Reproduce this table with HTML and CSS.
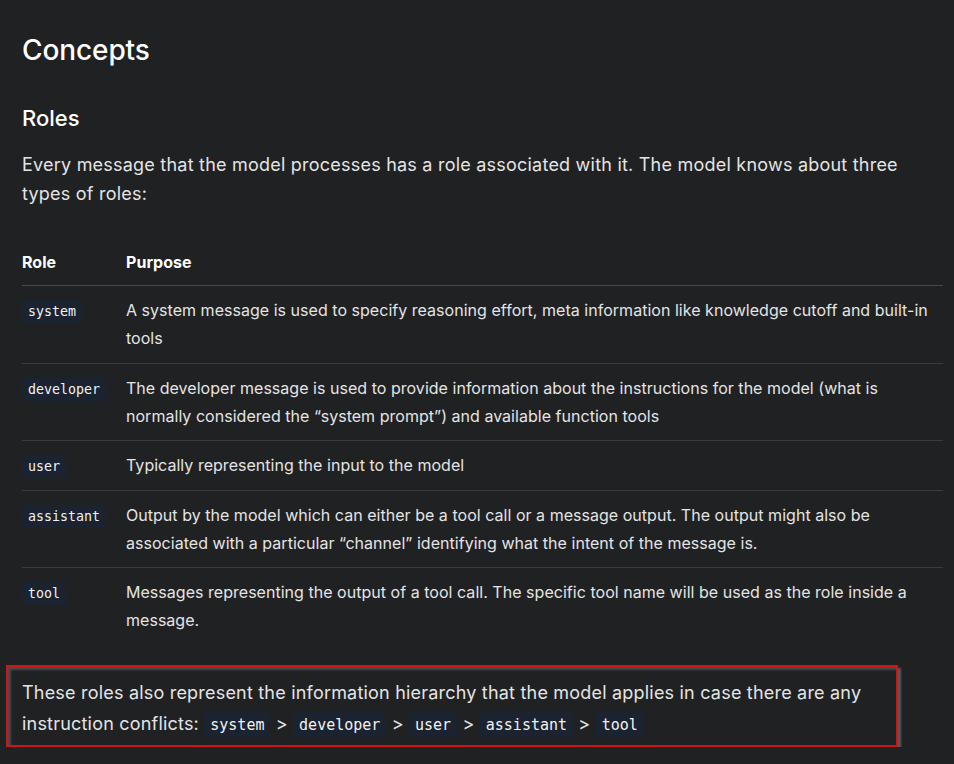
FILE: index.html
```html
<!DOCTYPE html>
<html lang="en">
<head>
<meta charset="utf-8">
<title>Concepts</title>
<link rel="stylesheet" href="styles.css">
</head>
<body>
<main class="doc">
  <h2 class="title">Concepts</h2>
  <h3 class="subtitle">Roles</h3>
  <p class="lead">Every message that the model processes has a role associated with it. The model knows about three types of roles:</p>
  <table class="roles">
    <thead>
      <tr><th class="col-role">Role</th><th>Purpose</th></tr>
    </thead>
    <tbody>
      <tr><td><code>system</code></td><td>A system message is used to specify reasoning effort, meta information like knowledge cutoff and built-in tools</td></tr>
      <tr><td><code>developer</code></td><td>The developer message is used to provide information about the instructions for the model (what is normally considered the “system prompt”) and available function tools</td></tr>
      <tr><td><code>user</code></td><td>Typically representing the input to the model</td></tr>
      <tr><td><code>assistant</code></td><td>Output by the model which can either be a tool call or a message output. The output might also be associated with a particular “channel” identifying what the intent of the message is.</td></tr>
      <tr><td><code>tool</code></td><td>Messages representing the output of a tool call. The specific tool name will be used as the role inside a message.</td></tr>
    </tbody>
  </table>
  <div class="callout">
    <p>These roles also represent the information hierarchy that the model applies in case there are any instruction conflicts: <code>system</code> &gt; <code>developer</code> &gt; <code>user</code> &gt; <code>assistant</code> &gt; <code>tool</code></p>
  </div>
</main>
</body>
</html>
```
FILE: styles.css
```css
html, body {
  margin: 0;
  padding: 0;
  background: #202123;
}
body {
  color: #e4e4e4;
  font-family: Inter, "Noto Sans", sans-serif;
}
.doc {
  padding: 30px 11px 0 22px;
}
.title {
  margin: 0;
  font-size: 28px;
  line-height: 40px;
  font-weight: 500;
  color: #ffffff;
  letter-spacing: -0.1px;
}
.subtitle {
  margin: 33px 0 0;
  font-size: 22px;
  line-height: 30px;
  font-weight: 500;
  color: #ffffff;
}
.lead {
  margin: 17px 0 0;
  max-width: 900px;
  font-size: 18px;
  line-height: 29px;
  letter-spacing: 0.22px;
}
code {
  font-family: "DejaVu Sans Mono", "Liberation Mono", monospace;
  background: #1b2230;
  color: #f2f2f2;
  border-radius: 3px;
  padding: 4px 6px;
  line-height: 1;
  letter-spacing: 0;
}
.roles {
  width: 100%;
  border-collapse: collapse;
  margin-top: 40px;
  font-size: 16px;
  line-height: 28px;
  letter-spacing: 0.03px;
}
.roles th {
  text-align: left;
  font-weight: 700;
  color: #ffffff;
  padding: 0 0 9px;
  border-bottom: 1px solid #47484c;
}
.roles th.col-role {
  width: 104px;
}
.roles td {
  vertical-align: top;
  padding: 10px 0 10.5px;
  border-bottom: 1px solid #3a3b3f;
}
.roles tbody tr:last-child td {
  border-bottom: none;
}
.roles td code {
  font-size: 13.3px;
}
.callout {
  margin: 20px 0 0 -16px;
  width: 892px;
  box-sizing: border-box;
  border: 2px solid #d41414;
  padding: 10px 14px 6px;
  box-shadow: 3px 3px 2px #5a5a5e, inset 3px 3px 2px #4a4a4e;
}
.callout p {
  margin: 0;
  font-size: 18px;
  line-height: 31px;
  letter-spacing: 0.2px;
}
.callout code {
  font-size: 15px;
}
```
